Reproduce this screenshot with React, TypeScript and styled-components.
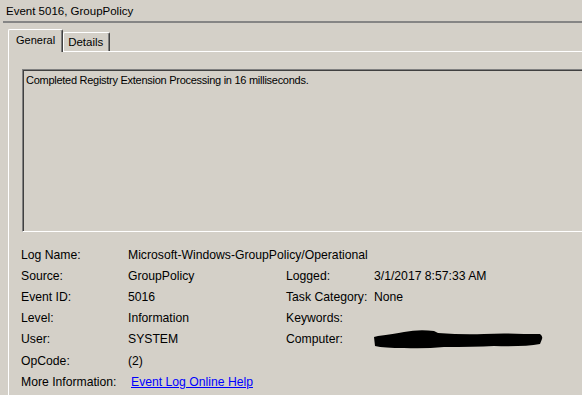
import React from 'react';
import styled, { createGlobalStyle } from 'styled-components';

// 全体のスタイル
const GlobalStyle = createGlobalStyle`
  html, body {
    margin: 0;
    padding: 0;
    background-color: #d4d0c8;
  }
  body {
    font-family: "Liberation Sans", Arial, sans-serif;
    font-size: 11px;
    color: #000000;
  }
`;

// イベントの詳細項目
const rows: { label: string; value?: string; label2?: string; value2?: string; wide?: boolean }[] = [
  { label: 'Log Name:', value: 'Microsoft-Windows-GroupPolicy/Operational', wide: true },
  { label: 'Source:', value: 'GroupPolicy', label2: 'Logged:', value2: '3/1/2017 8:57:33 AM' },
  { label: 'Event ID:', value: '5016', label2: 'Task Category:', value2: 'None' },
  { label: 'Level:', value: 'Information', label2: 'Keywords:', value2: '' },
  { label: 'User:', value: 'SYSTEM', label2: 'Computer:' },
  { label: 'OpCode:', value: '(2)', wide: true },
];

// 黒塗り(コンピューター名)
const Redaction = () => (
  <svg width="170" height="20" viewBox="0 0 170 20">
    <path
      d="M0 8 L4 7 Q20 5 30 3 Q45 0 60 2 L64 4 Q90 6 110 5 Q130 4 150 5 L166 5 Q169 7 168 10 L166 15 Q150 18 120 17 Q100 18 70 18 Q50 20 30 19 Q10 19 1 17 Z"
      fill="#000000"
    />
  </svg>
);

const App = () => {
  const cellList: JSX.Element[] = [];
  rows.forEach((r, i) => {
    cellList.push(<Label key={`l${i}`}>{r.label}</Label>);
    if (r.wide) {
      cellList.push(<Value key={`v${i}`} $span={3}>{r.value}</Value>);
    } else {
      cellList.push(<Value key={`v${i}`}>{r.value}</Value>);
      cellList.push(<Label key={`l2${i}`}>{r.label2}</Label>);
      cellList.push(
        <Value key={`v2${i}`}>{r.label2 === 'Computer:' ? <Redaction /> : r.value2}</Value>
      );
    }
  });
  cellList.push(<Label key="more">More Information:</Label>);
  cellList.push(
    <Value key="link" $span={3}>
      <HelpLink href="#">Event Log Online Help</HelpLink>
    </Value>
  );

  return (
    <>
      <GlobalStyle />
      <Frame>
        <Title>Event 5016, GroupPolicy</Title>
        <Separator />
        <TabBar>
          <Tab $active>General</Tab>
          <Tab>Details</Tab>
        </TabBar>
        <Panel>
          <MessageBox>Completed Registry Extension Processing in 16 milliseconds.</MessageBox>
          <InfoGrid>{cellList}</InfoGrid>
        </Panel>
      </Frame>
    </>
  );
};

export default App;

// フレーム
const Frame = styled.div`
  width: 582px;
  height: 395px;
  overflow: hidden;
  background-color: #d4d0c8;
`;

// タイトル
const Title = styled.div`
  height: 21px;
  line-height: 22px;
  padding-left: 6px;
  font-size: 11.5px;
  white-space: nowrap;
`;

// 区切り線
const Separator = styled.div`
  margin-left: 3px;
  height: 2px;
  background-color: #858585;
`;

// タブバー
const TabBar = styled.div`
  display: flex;
  align-items: flex-end;
  margin-top: 6px;
  margin-left: 8px;
  height: 22px;
`;

// タブ
const Tab = styled.div<{ $active?: boolean }>`
  box-sizing: border-box;
  height: ${p => (p.$active ? '23px' : '19px')};
  margin-bottom: ${p => (p.$active ? '-1px' : '0')};
  padding: ${p => (p.$active ? '2px 7px 0 7px' : '1px 6px 0 4px')};
  line-height: 16px;
  font-size: ${p => (p.$active ? '11px' : '11.5px')};
  border-top: 1px solid #ffffff;
  border-left: 1px solid #ffffff;
  border-right: 1px solid #404040;
  box-shadow: inset -1px 0 0 #808080;
  border-radius: 2px 2px 0 0;
  background-color: #d4d0c8;
  position: relative;
  z-index: ${p => (p.$active ? 1 : 0)};
  white-space: nowrap;
`;

// タブパネル
const Panel = styled.div`
  margin-left: 8px;
  border-top: 1px solid #ffffff;
  border-left: 1px solid #ffffff;
  padding: 17px 0 0 13px;
  height: 400px;
`;

// メッセージ欄
const MessageBox = styled.div`
  box-sizing: border-box;
  height: 163px;
  width: 600px;
  border-top: 1px solid #808080;
  border-left: 1px solid #808080;
  border-bottom: 1px solid #ffffff;
  box-shadow: inset 1px 1px 0 #404040;
  padding: 4px 0 0 3px;
  line-height: 13px;
  letter-spacing: -0.27px;
`;

// 詳細グリッド
const InfoGrid = styled.div`
  display: grid;
  grid-template-columns: 107px 158px 88px 1fr;
  grid-auto-rows: 21.2px;
  margin-top: 12px;
  margin-left: -1px;
  align-items: center;
  font-size: 12.2px;
`;

// 項目名
const Label = styled.div`
  white-space: nowrap;
`;

// 値
const Value = styled.div<{ $span?: number }>`
  grid-column: ${p => (p.$span ? `span ${p.$span}` : 'auto')};
  white-space: nowrap;
  display: flex;
  align-items: center;
`;

// リンク
const HelpLink = styled.a`
  color: #0000ff;
  text-decoration: underline;
  margin-left: 3px;
`;
